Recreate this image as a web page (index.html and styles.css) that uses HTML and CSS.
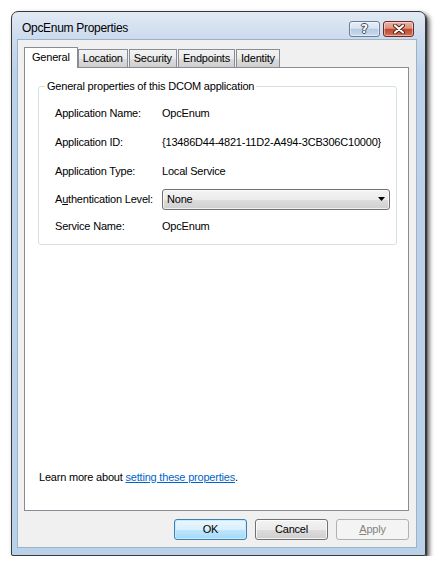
FILE: index.html
```html
<!DOCTYPE html>
<html>
<head>
<meta charset="utf-8">
<title>OpcEnum Properties</title>
<link rel="stylesheet" href="styles.css">
</head>
<body>
<div class="window">
  <div class="titlebar">
    <span class="title">OpcEnum Properties</span>
    <div class="caption-buttons">
      <div class="cbtn help"><span class="qmark">?</span></div>
      <div class="cbtn close">
        <svg width="14" height="10" viewBox="0 0 14 10">
          <path d="M3 1.5 L11 8.5 M11 1.5 L3 8.5" stroke="#4a1c16" stroke-width="4" stroke-linecap="round" fill="none"/>
          <path d="M3 1.5 L11 8.5 M11 1.5 L3 8.5" stroke="#ffffff" stroke-width="2.2" stroke-linecap="round" fill="none"/>
        </svg>
      </div>
    </div>
  </div>
  <div class="client">
    <div class="tabs">
      <div class="tab selected">General</div>
      <div class="tab">Location</div>
      <div class="tab">Security</div>
      <div class="tab">Endpoints</div>
      <div class="tab">Identity</div>
    </div>
    <div class="page">
      <fieldset class="group">
        <legend>General properties of this DCOM application</legend>
        <div class="rows">
          <span class="label">Application Name:</span>
          <span class="value">OpcEnum</span>
          <span class="label">Application ID:</span>
          <span class="value">{13486D44-4821-11D2-A494-3CB306C10000}</span>
          <span class="label">Application Type:</span>
          <span class="value">Local Service</span>
          <span class="label">A<u>u</u>thentication Level:</span>
          <div class="combo">
            <span>None</span>
            <svg class="arrow" width="7" height="4" viewBox="0 0 7 4"><polygon points="0,0 7,0 3.5,4" fill="#000"/></svg>
          </div>
          <span class="label">Service Name:</span>
          <span class="value">OpcEnum</span>
        </div>
      </fieldset>
      <p class="learn">Learn more about <a href="#" class="link">setting these properties</a>.</p>
    </div>
    <div class="buttons">
      <div class="btn default">OK</div>
      <div class="btn">Cancel</div>
      <div class="btn disabled"><u>A</u>pply</div>
    </div>
  </div>
</div>
</body>
</html>
```

FILE: styles.css
```css
* { box-sizing: border-box; }
html, body { margin: 0; padding: 0; background: #ffffff; }
body {
  font-family: "Liberation Sans", Arial, sans-serif;
  font-size: 11px;
  letter-spacing: -0.2px;
  color: #000;
}
.window {
  margin: 11px 0 0 11px;
  width: 415px;
  height: 545px;
  border: 1px solid #383838;
  border-radius: 7px 7px 2px 2px;
  background: linear-gradient(#e2eaf4 0, #cddcee 24px, #bcd2ea 60px, #bad1ea 100%);
  box-shadow: 3px 3px 5px rgba(0, 0, 0, 0.7), 1px 1px 1px rgba(0,0,0,0.5);
  display: flex;
  flex-direction: column;
  padding: 0 8px 7px 5px;
}
.titlebar {
  height: 27px;
  display: flex;
  align-items: flex-start;
  justify-content: space-between;
  flex: none;
}
.title {
  font-size: 12px;
  line-height: 15px;
  margin: 9px 0 0 5px;
  letter-spacing: -0.3px;
  color: #000;
}
.caption-buttons {
  display: flex;
  gap: 3px;
  margin: 9px 3px 0 0;
}
.cbtn {
  width: 31px;
  height: 16px;
  border: 1px solid #6b7d95;
  border-radius: 3px;
  display: flex;
  align-items: center;
  justify-content: center;
  box-shadow: inset 0 0 0 1px rgba(255,255,255,0.45);
}
.help {
  background: linear-gradient(#e6eef7 0%, #d6e3f1 45%, #b6cae2 52%, #cadcef 100%);
}
.close {
  border-color: #6e2a22;
  background: linear-gradient(#eab2a5 0%, #dc9282 45%, #c2472f 52%, #d4725a 100%);
}
.qmark {
  font-family: "DejaVu Sans", sans-serif;
  font-weight: bold;
  font-size: 12px;
  line-height: 12px;
  letter-spacing: 0;
  color: #fff;
  text-shadow: 1px 0 0 #3c4b5e, -1px 0 0 #3c4b5e, 0 1px 0 #3c4b5e, 0 -1px 0 #3c4b5e;
}
.client {
  flex: 1;
  background: #f0f0f0;
  border: 1px solid #9db2c9;
  padding: 7px 7px 7px 6px;
  display: flex;
  flex-direction: column;
}
.tabs {
  display: flex;
  align-items: flex-end;
  height: 20px;
  flex: none;
}
.tab {
  height: 18px;
  line-height: 16px;
  padding: 0 4px;
  border: 1px solid #898c95;
  border-bottom: none;
  background: linear-gradient(#f3f3f3 0%, #ebebeb 50%, #dddddd 51%, #cfcfcf 100%);
  margin-left: 1px;
}
.tab.selected {
  height: 21px;
  line-height: 19px;
  padding: 0 7px;
  margin: 0 0 -1px 0;
  background: #ffffff;
  position: relative;
  z-index: 1;
}
.tab.selected + .tab { margin-left: 0; }
.page {
  flex: 1;
  background: #ffffff;
  border: 1px solid #898c95;
  display: flex;
  flex-direction: column;
}
.group {
  margin: 12px 11px 0 13px;
  padding: 0;
  border: 1px solid #d5dfe5;
  border-radius: 3px;
  min-width: 0;
}
.group legend {
  margin-left: 6px;
  padding: 0 2px;
  line-height: 13px;
}
.rows {
  display: grid;
  grid-template-columns: 107px 228px;
  grid-template-rows: 29px 29px 29px 28px 26px;
  align-items: center;
  padding: 5px 0 5px 16px;
}
.combo {
  height: 21px;
  border: 1px solid #707070;
  border-radius: 3px;
  background: linear-gradient(#f3f3f3 0%, #ebebeb 50%, #dddddd 51%, #cfcfcf 100%);
  box-shadow: inset 0 0 0 1px rgba(255,255,255,0.7);
  display: flex;
  align-items: center;
  justify-content: space-between;
  padding: 0 4px 0 4px;
}
.learn {
  margin: auto 0 26px 14px;
  line-height: 13px;
}
.link { color: #0066cc; text-decoration: underline; }
.buttons {
  flex: none;
  display: flex;
  justify-content: flex-end;
  gap: 8px;
  margin-top: 8px;
}
.btn {
  width: 73px;
  height: 21px;
  border: 1px solid #707070;
  border-radius: 3px;
  background: linear-gradient(#f2f2f2 0%, #ebebeb 50%, #dddddd 51%, #cfcfcf 100%);
  box-shadow: inset 0 0 0 1px rgba(255,255,255,0.75);
  display: flex;
  align-items: center;
  justify-content: center;
  line-height: 13px;
}
.btn.default {
  border-color: #3c7fb1;
  background: linear-gradient(#eaf6fd 0%, #d9f0fc 50%, #bee6fd 51%, #a7d9f5 100%);
  box-shadow: inset 0 0 0 1px #c8eafc;
}
.btn.disabled {
  border-color: #adb2b5;
  background: #f4f4f4;
  box-shadow: none;
  color: #838383;
}
```
